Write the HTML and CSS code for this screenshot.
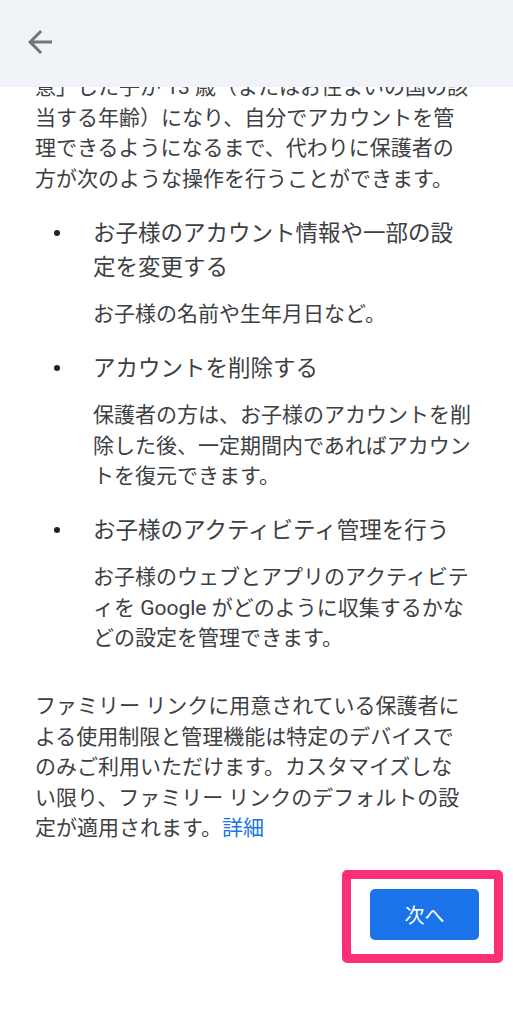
FILE: index.html
```html
<!DOCTYPE html>
<html lang="ja">
<head>
<meta charset="utf-8">
<title>ファミリー リンク</title>
<link rel="stylesheet" href="styles.css">
</head>
<body>
<header class="topbar">
  <button class="back" aria-label="戻る">
    <svg viewBox="0 0 24 24" width="36" height="36"><path d="M20 11H7.83l5.59-5.59L12 4l-8 8 8 8 1.41-1.41L7.83 13H20v-2z"/></svg>
  </button>
</header>
<main class="content">
  <p class="intro">意」した子が 13 歳（またはお住まいの国の該当する年齢）になり、自分でアカウントを管理できるようになるまで、代わりに保護者の方が次のような操作を行うことができます。</p>
  <ul class="features">
    <li class="feature">
      <span class="dot"></span>
      <div class="feature-body">
        <div class="feature-title">お子様のアカウント情報や一部の設定を変更する</div>
        <div class="feature-desc">お子様の名前や生年月日など。</div>
      </div>
    </li>
    <li class="feature">
      <span class="dot"></span>
      <div class="feature-body">
        <div class="feature-title">アカウントを削除する</div>
        <div class="feature-desc">保護者の方は、お子様のアカウントを削除した後、一定期間内であればアカウントを復元できます。</div>
      </div>
    </li>
    <li class="feature">
      <span class="dot"></span>
      <div class="feature-body">
        <div class="feature-title">お子様のアクティビティ管理を行う</div>
        <div class="feature-desc">お子様のウェブとアプリのアクティビティを Google がどのように収集するかなどの設定を管理できます。</div>
      </div>
    </li>
  </ul>
  <p class="note"><span>ファミリー リンクに用意されている保護者による使用制限と管理機能は特定のデバイスでのみご利用いただけます。カスタマイズしない限り、ファミリー リンクのデフォルトの設定が適用されます。</span><a class="link" href="#">詳細</a></p>
  <div class="actions">
    <div class="highlight">
      <button class="next">次へ</button>
    </div>
  </div>
</main>
</body>
</html>
```

FILE: styles.css
```css
html, body {
  margin: 0;
  padding: 0;
  background: #ffffff;
}

body {
  font-family: Roboto, "Noto Sans CJK JP", sans-serif;
  color: #3c4043;
  width: 513px;
  height: 1024px;
  overflow: hidden;
  position: relative;
}

.topbar {
  position: absolute;
  top: 0;
  left: 0;
  right: 0;
  height: 87px;
  background: #f0f3f8;
  display: flex;
  align-items: center;
  padding-left: 22px;
  padding-bottom: 3px;
  box-sizing: border-box;
  z-index: 2;
}

.back {
  border: 0;
  background: none;
  padding: 0;
  width: 36px;
  height: 36px;
  display: flex;
}

.back svg {
  fill: #72767b;
}

.content {
  padding: 72px 42px 0 35px;
}

.intro,
.note {
  margin: 0;
  font-size: 21px;
  line-height: 30.5px;
  width: 436px;
}

.features {
  list-style: none;
  margin: 22px 0 0 0;
  padding: 0;
  display: flex;
  flex-direction: column;
  gap: 21.5px;
}

.feature {
  display: grid;
  grid-template-columns: 58px 380px;
}

.dot {
  width: 6px;
  height: 6px;
  border-radius: 50%;
  background: #202124;
  margin: 14px 0 0 19px;
}

.feature-title {
  font-size: 22.5px;
  line-height: 34px;
}

.feature-desc {
  margin-top: 15px;
  font-size: 21px;
  line-height: 30.5px;
}

.note {
  margin-top: 37.5px;
}

.link {
  color: #1a73e8;
  text-decoration: none;
}

.actions {
  display: flex;
  justify-content: flex-end;
  margin: 26px -32px 0 0;
}

.highlight {
  border: 9px solid #fb2f77;
  border-radius: 5px;
  padding: 10px 15px 14px 19px;
}

.next {
  display: block;
  width: 109px;
  height: 51px;
  border: 0;
  border-radius: 5px;
  background: #1a73e8;
  color: #ffffff;
  font-family: Roboto, "Noto Sans CJK JP", sans-serif;
  font-size: 20px;
  padding: 0;
}
```
